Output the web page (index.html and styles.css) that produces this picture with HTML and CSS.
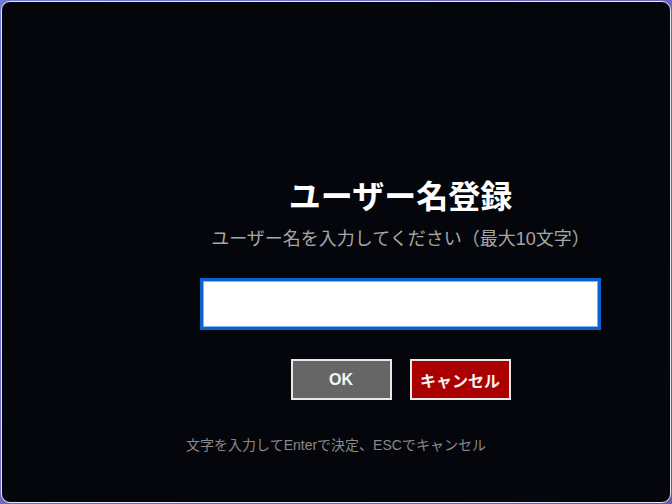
FILE: index.html
```html
<!DOCTYPE html>
<html lang="ja">
<head>
<meta charset="utf-8">
<title>ユーザー名登録</title>
<link rel="stylesheet" href="styles.css">
</head>
<body>
<div class="window">
  <div class="dialog">
    <h1 class="title">ユーザー名登録</h1>
    <p class="subtitle">ユーザー名を入力してください（最大10文字）</p>
    <div class="input-wrap"><input class="name-input" type="text" maxlength="10"></div>
    <div class="buttons">
      <button class="btn btn-ok">OK</button>
      <button class="btn btn-cancel">キャンセル</button>
    </div>
  </div>
  <p class="hint">文字を入力してEnterで決定、ESCでキャンセル</p>
</div>
</body>
</html>
```
FILE: styles.css
```css
html, body {
  margin: 0;
  padding: 0;
  height: 100%;
}
html {
  background: linear-gradient(135deg, #6f7ad8 0%, #6a55b0 100%);
}
body {
  padding: 1px;
  box-sizing: border-box;
  font-family: "Liberation Sans", "Noto Sans CJK JP", sans-serif;
}
.window {
  height: 100%;
  box-sizing: border-box;
  border: 1px solid #e6e6ee;
  border-radius: 9px;
  background: #05060b;
  padding-top: 176px;
  overflow: hidden;
}
.dialog {
  width: 401px;
  margin-left: 198px;
  display: flex;
  flex-direction: column;
  align-items: center;
}
.title {
  margin: 0;
  font-size: 32px;
  line-height: 38px;
  font-weight: 700;
  color: #ffffff;
}
.subtitle {
  margin: 10px 0 0;
  font-size: 18px;
  line-height: 26px;
  color: #a6a6a6;
}
.input-wrap {
  margin-top: 26px;
  width: 100%;
}
.name-input {
  display: block;
  width: 100%;
  height: 52px;
  box-sizing: border-box;
  border: 3px solid #0b62cc;
  box-shadow: inset 0 0 0 1px #7fb2ee;
  background: #ffffff;
  outline: none;
  font-size: 20px;
  font-family: inherit;
  padding: 0 10px;
}
.buttons {
  margin-top: 29px;
  display: flex;
  gap: 18px;
}
.btn {
  width: 101px;
  height: 41px;
  box-sizing: border-box;
  border: 2px solid #e8e8e8;
  color: #f4f4f4;
  font-family: "Liberation Sans", "Noto Sans CJK JP", sans-serif;
  font-weight: 700;
  padding: 0;
  cursor: pointer;
}
.btn-ok {
  background: #666666;
  font-size: 16px;
}
.btn-cancel {
  background: #aa0000;
  font-size: 16px;
}
.hint {
  margin: 35px 0 0;
  text-align: center;
  font-size: 14px;
  line-height: 20px;
  color: #8a8a8a;
}
```
